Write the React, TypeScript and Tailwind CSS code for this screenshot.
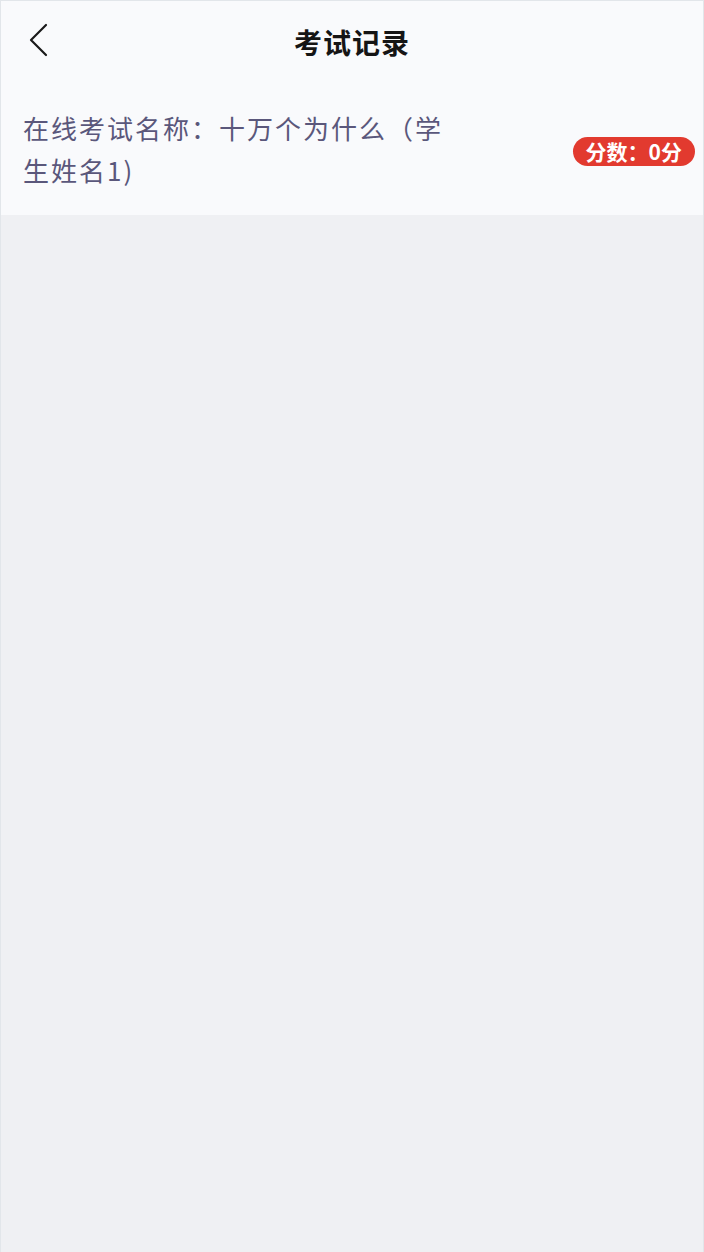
const font = { fontFamily: '"Noto Sans CJK SC", "Noto Sans", sans-serif' };

export default function App() {
  return (
    <div
      className="min-h-[1252px] w-full bg-[#eff0f3] border-l border-t border-r border-[#e2e6ea]"
      style={font}
    >
      {/* header */}
      <div className="relative flex h-[85px] items-center justify-center bg-[#f9fafc] pb-[4px]">
        <button className="absolute left-[26px] top-[22px] p-0">
          <svg width="22" height="34" viewBox="0 0 22 34" fill="none">
            <path d="M19 2 L4 17 L19 32" stroke="#1a1a1a" strokeWidth="2.2" strokeLinecap="round" strokeLinejoin="round" />
          </svg>
        </button>
        <h1 className="text-[28px] font-bold tracking-[1px] text-[#151515]">考试记录</h1>
      </div>

      {/* record */}
      <div className="flex h-[129px] items-center justify-between bg-[#f9fafc] pb-[4px] pl-[22px] pr-[8px]">
        <p className="w-[428px] text-[26px] leading-[42px] tracking-[2px] text-[#5a577b]">
          在线考试名称：十万个为什么（学生姓名1)
        </p>
        <span className="mt-[6px] flex h-[29px] items-center rounded-full bg-[#e23a2f] px-[13px] text-[21px] font-bold text-white">
          分数：0分
        </span>
      </div>
    </div>
  );
}
